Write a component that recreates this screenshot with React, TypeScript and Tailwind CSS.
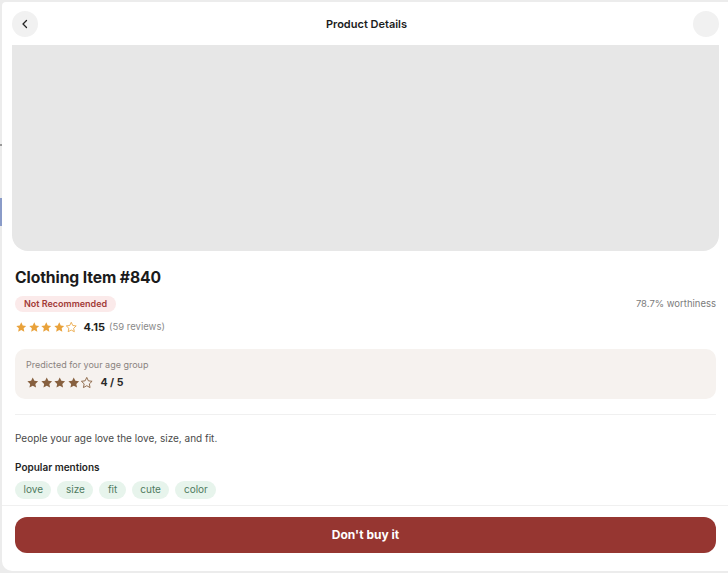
import React from "react";

const Star = ({ filled, color, size }: { filled: boolean; color: string; size: number }) => (
  <svg width={size} height={size} viewBox="0 0 24 24" className="block">
    <path
      d="M12 2.5l2.9 6.1 6.6.8-4.9 4.6 1.3 6.6L12 17.3l-5.9 3.3 1.3-6.6-4.9-4.6 6.6-.8z"
      fill={filled ? color : "none"}
      stroke={color}
      strokeWidth={filled ? 0 : 1.6}
      strokeLinejoin="round"
    />
  </svg>
);

const Stars = ({ n, color, size }: { n: number; color: string; size: number }) => (
  <div className="flex items-center">
    {[0, 1, 2, 3, 4].map((i) => (
      <Star key={i} filled={i < n} color={color} size={size} />
    ))}
  </div>
);

export default function App() {
  const chips = ["love", "size", "fit", "cute", "color"];
  return (
    <div
      className="relative w-[728px] h-[573px] overflow-hidden bg-[#ececec]"
      style={{ fontFamily: "Inter, 'Noto Sans', sans-serif" }}
    >
      <div className="absolute left-0 top-[198px] w-[2px] h-[28px] bg-[#8a9bc8]" />
      <div className="absolute left-0 top-[144px] w-[2px] h-[2px] bg-[#999]" />
      <div className="absolute left-[2px] top-[2px] w-[727px] h-[569px] bg-white rounded-tl-[4px] rounded-bl-[10px] flex flex-col">
        {/* header */}
        <div className="h-[43px] flex items-center justify-between pl-[10px] pr-[10px] pt-[1px]">
          <div className="w-[26px] h-[26px] rounded-full bg-[#f1f1f1] flex items-center justify-center">
            <svg width="12" height="12" viewBox="0 0 24 24" fill="none" stroke="#222" strokeWidth="2.6" strokeLinecap="round" strokeLinejoin="round">
              <path d="M15 5l-7 7 7 7" />
            </svg>
          </div>
          <div className="text-[11px] font-semibold text-[#1c1c1c] ml-[2px]">Product Details</div>
          <div className="w-[26px] h-[26px] rounded-full bg-[#f1f1f1]" />
        </div>
        {/* image */}
        <div className="mx-[10px] h-[206px] bg-[#e7e7e7] rounded-b-[16px]" />
        {/* content */}
        <div className="px-[13px]">
          <div className="mt-[16px] text-[15.7px] leading-[22px] font-bold text-[#1b1b1b] tracking-[-0.1px]">Clothing Item #840</div>
          <div className="mt-[7px] flex items-center justify-between">
            <div className="h-[16px] px-[9px] rounded-full bg-[#fbeaea] text-[#a23b38] text-[9px] font-semibold flex items-center">Not Recommended</div>
            <div className="text-[9.5px] text-[#7b7b7b]">78.7% worthiness</div>
          </div>
          <div className="mt-[7px] flex items-center">
            <Stars n={4} color="#e9a23b" size={12.5} />
            <span className="ml-[6px] text-[11px] font-bold text-[#1f1f1f]">4.15</span>
            <span className="ml-[4px] text-[9.5px] text-[#8a8a8a]">(59 reviews)</span>
          </div>
          <div className="mt-[13px] h-[50px] rounded-[10px] bg-[#f6f2ef] px-[11px] pt-[10px]">
            <div className="text-[9px] leading-[11px] text-[#8a8380]">Predicted for your age group</div>
            <div className="mt-[5px] flex items-center">
              <Stars n={4} color="#87603f" size={13.5} />
              <span className="ml-[7px] text-[10.5px] font-bold text-[#2a2a2a]">4 / 5</span>
            </div>
          </div>
          <div className="mt-[15px] h-px bg-[#f0f0f0]" />
          <div className="mt-[16px] text-[10px] leading-[14px] text-[#4a4a4a]">People your age love the love, size, and fit.</div>
          <div className="mt-[15px] text-[10px] leading-[14px] font-semibold text-[#1f1f1f]">Popular mentions</div>
          <div className="mt-[7px] flex gap-[6px]">
            {chips.map((c) => (
              <div key={c} className="h-[18px] px-[8.5px] rounded-full bg-[#e7f4ec] text-[#4f7b5f] text-[10px] flex items-center">
                {c}
              </div>
            ))}
          </div>
        </div>
        <div className="mt-[6px] h-px bg-[#f0f0f0]" />
        <div className="px-[13px] pt-[11px]">
          <div className="h-[36px] rounded-[12px] bg-[#963631] flex items-center justify-center text-white text-[12px] font-bold">
            Don't buy it
          </div>
        </div>
      </div>
    </div>
  );
}
